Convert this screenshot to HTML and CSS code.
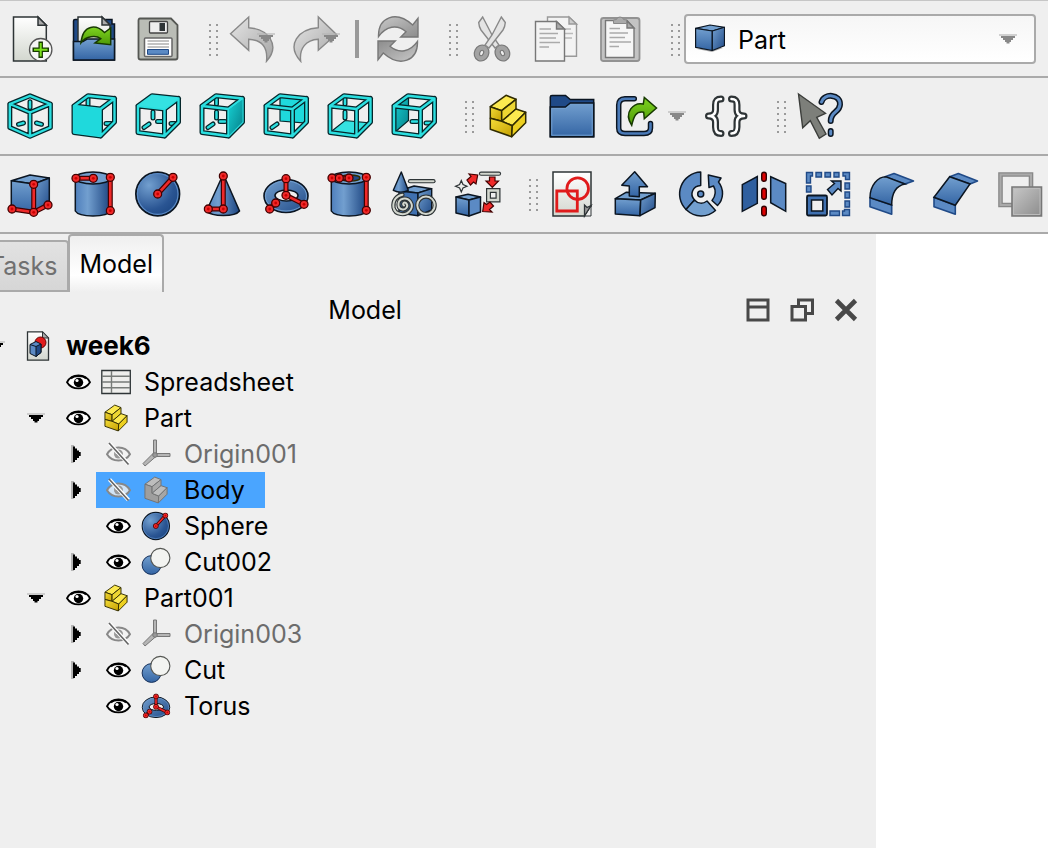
FILE: index.html
```
<!DOCTYPE html>
<html lang="en">
<head>
<meta charset="utf-8">
<title>week6</title>
<link rel="stylesheet" href="styles.css">
</head>
<body>
<svg class="defs" width="0" height="0" aria-hidden="true">
  <defs>
    <linearGradient id="blue" x1="0" y1="0" x2="1" y2="1"><stop offset="0" stop-color="#729fcf"/><stop offset="1" stop-color="#204a87"/></linearGradient>
    <radialGradient id="blueBall" cx=".3" cy=".3" r=".75"><stop offset="0" stop-color="#729fcf"/><stop offset=".75" stop-color="#2a5593"/><stop offset="1" stop-color="#204a87"/></radialGradient>
    <linearGradient id="blueV" x1="0" y1="0" x2="0" y2="1"><stop offset="0" stop-color="#729fcf"/><stop offset="1" stop-color="#3465a4"/></linearGradient>
    <linearGradient id="blueH" x1="0" y1="0" x2="1" y2="0"><stop offset="0" stop-color="#4f7fbc"/><stop offset=".35" stop-color="#729fcf"/><stop offset="1" stop-color="#1c4480"/></linearGradient>
    <linearGradient id="paper" x1="0" y1="0" x2="0" y2="1"><stop offset="0" stop-color="#fff"/><stop offset="1" stop-color="#d3d7cf"/></linearGradient>
    <linearGradient id="grey" x1="0" y1="0" x2="1" y2="1"><stop offset="0" stop-color="#c8c8c8"/><stop offset="1" stop-color="#8c8c8c"/></linearGradient>
    <linearGradient id="pale" x1="0" y1="0" x2="1" y2="1"><stop offset="0" stop-color="#e6e6e6"/><stop offset="1" stop-color="#a6a6a6"/></linearGradient>
    <linearGradient id="green" x1="0" y1="0" x2="0" y2="1"><stop offset="0" stop-color="#7ed321"/><stop offset="1" stop-color="#4e9a06"/></linearGradient>
    <linearGradient id="teal" x1="0" y1="0" x2="1" y2="1"><stop offset="0" stop-color="#16d0d2"/><stop offset="1" stop-color="#06808a"/></linearGradient>
    <linearGradient id="gold" x1="0" y1="0" x2="1" y2="1"><stop offset="0" stop-color="#f5dd3a"/><stop offset="1" stop-color="#c4a000"/></linearGradient>

    <g id="frame"><path d="M4 14 30.500 17V44L4 40.500ZM4 14 18 3.800 44.500 6.500V30L30.500 44M30.500 17 44.500 6.500"/></g>
    <symbol id="ball" viewBox="-5 -5 10 10"><circle r="4" fill="#ef2929" stroke="#400" stroke-width="1.300"/><circle r="1.400" fill="#c00"/></symbol>
    <symbol id="menu-arrow" viewBox="0 0 18 10"><path d="M0 0H18V2H0Z" fill="#b5b5b5" opacity=".6"/><path d="M2 2H16V4H14V6H12V8H10.500V9.500H7.500V8H6V6H4V4H2Z"/></symbol>
    <symbol id="right-arrow" viewBox="0 0 10 18"><path d="M0 0H3V18H0Z" fill="#b5b5b5"/><path d="M2 1.500H4V3.500H6V5.500H8V7H9.700V11H8V13H6V15H4V17H2Z"/></symbol>
    <symbol id="part" viewBox="0 0 48 48">
      <g stroke="#302b00" stroke-width="1.500" stroke-linejoin="round">
        <path d="M6.300 14.700 22 3.300 32 7.300 17.700 18.700Z" fill="#fce94f"/>
        <path d="M6.300 14.700 17.700 18.700V29.300L6.300 26.300Z" fill="url(#gold)"/>
        <path d="M17.700 18.700 32 7.300V17L17.700 29.300Z" fill="#edd632"/>
        <path d="M17.700 29.300 32 17 41.700 20.300 28.300 33.700Z" fill="#fce94f"/>
        <path d="M6.300 26.300 17.700 29.300 28.300 33.700 27.700 44.700 6.300 37.300Z" fill="url(#gold)"/>
        <path d="M28.300 33.700 41.700 20.300V30.700L27.700 44.700Z" fill="#edd020"/>
      </g>
    </symbol>
    <symbol id="sphere" viewBox="0 0 48 48">
      <circle cx="23.700" cy="24" r="21.800" fill="url(#blueBall)" stroke="#0b1521" stroke-width="1.800"/>
      <circle cx="23.700" cy="24" r="20.300" fill="none" stroke="#5b8ac4" stroke-width="1.200"/>
      <path class="rod-o" d="M23.700 24 39 7.300"/><path class="rod-i" d="M23.700 24 39 7.300"/>
      <use href="#ball" x="18.700" y="19" width="10" height="10"/><use href="#ball" x="34" y="2.300" width="10" height="10"/>
    </symbol>
    <symbol id="torus" viewBox="0 0 48 48">
      <path fill-rule="evenodd" d="M2 26a22 16.500 0 1 0 44 0a22 16.500 0 1 0-44 0ZM13 25.500a11.500 5.500 0 1 1 23 0a11.500 5.500 0 1 1-23 0Z" fill="url(#blue)" stroke="#0b1521" stroke-width="1.600"/>
      <ellipse cx="24" cy="26" rx="20.500" ry="15" fill="none" stroke="#729fcf"/>
      <path class="rod-o" d="M24 8.700V25.300L42 34.300M13.700 33 7.700 39"/><path class="rod-i" d="M24 8.700V25.300L42 34.300M13.700 33 7.700 39"/>
      <use href="#ball" x="19" y="3.700" width="10" height="10"/><use href="#ball" x="19" y="20.300" width="10" height="10"/><use href="#ball" x="37" y="29.300" width="10" height="10"/><use href="#ball" x="8.700" y="28" width="10" height="10"/><use href="#ball" x="2.700" y="34" width="10" height="10"/>
    </symbol>
    <symbol id="eye" viewBox="0 0 25 16">
      <path d="M1 8.200C6-.8 19-.8 24 8.200 19 16.500 6 16.500 1 8.200Z" fill="#fff" stroke="#000" stroke-width="1.800"/>
      <path d="M5 4.500C8 1 17 1 20 4.500" fill="none" stroke="#000" stroke-width="2"/>
      <circle cx="12.500" cy="8.500" r="4.700"/><circle cx="11" cy="6.500" r="1.600" fill="#fff"/>
    </symbol>
    <symbol id="eye-off" viewBox="0 0 25 24">
      <path d="M1 12.200C6 3.200 19 3.200 24 12.200 19 20.500 6 20.500 1 12.200Z" fill="#f4f4f4" fill-opacity=".8" stroke="#888" stroke-width="2"/>
      <circle cx="12.500" cy="12" r="4.500" fill="#999"/><circle cx="11" cy="10.500" r="1.600" fill="#fff"/>
      <path d="M3.500 1.500 22.500 22" stroke="#fff" stroke-width="4"/><path d="M3 1 22.500 22.500" stroke="#666" stroke-width="1.700"/>
    </symbol>
    <symbol id="origin" viewBox="0 0 30 30">
      <g stroke="#777" stroke-width="1" fill="#b5b5b5"><path d="M12.500 1H15.500V15H12.500Z"/><path d="M14 14.500H29V17.500H14Z"/><path d="M12.500 14 2 24.500 4 27 15.500 17Z"/><circle cx="14" cy="16" r="2.300" fill="#999"/></g>
    </symbol>
    <symbol id="cut-shape" viewBox="0 0 30 30">
      <circle cx="10.500" cy="18" r="9.400" fill="url(#blueV)" stroke="#16305a" stroke-width="1"/>
      <circle cx="19.300" cy="11" r="9.600" fill="#f3f4f1" stroke="#555753" stroke-width="1.100"/>
    </symbol>
  </defs>
</svg>

<header class="toolbars">
  <div class="toolbar" role="toolbar" aria-label="File">
    <button class="tool" aria-label="New"><svg viewBox="0 0 48 48"><path d="M7.500 2H32L40.300 10.300V46H7.500Z" fill="url(#paper)" stroke="#2e3436" stroke-width="1.500"/><path d="M32 2V10.300H40.300Z" fill="#aaa" stroke="#2e3436" stroke-width="1.500"/><circle cx="34.700" cy="34.700" r="11.200" fill="#f5f5f5" stroke="#555" stroke-width="1.300"/><path d="M34.700 26.500V43M26.500 34.700H43" stroke="#173a00" stroke-width="4.500"/><path d="M34.700 28V41.500M28 34.700H41.500" stroke="#7be01c" stroke-width="2"/></svg></button>
    <button class="tool" aria-label="Open"><svg viewBox="0 0 48 48"><path d="M3.500 6Q3.500 4.500 5 4.500H42V9H44.500V45H3.500Z" fill="#204a87" stroke="#0b1521" stroke-width="1.500"/><path d="M8 2H32L40 10V34H8Z" fill="url(#paper)" stroke="#2e3436" stroke-width="1.500"/><path d="M32 2V10H40Z" fill="#aaa" stroke="#2e3436" stroke-width="1.500"/><path d="M3.500 26.500H13L17 24H44.500V45H3.500Z" fill="url(#blueV)" stroke="#0b1521" stroke-width="1.500"/><path d="M11 27.700C13 8 27 10 34.500 17.500L40.700 13V29.700L25 28 30.700 23.700C26 20 16 21 11 27.700Z" fill="url(#green)" stroke="#173a00" stroke-width="1.500"/></svg></button>
    <button class="tool" aria-label="Save"><svg viewBox="0 0 48 48"><path d="M6 3.500H37L43.500 10V42.500Q43.500 44.500 41.500 44.500H6.500Q4.500 44.500 4.500 42.500V5.500Q4.500 3.500 6 3.500Z" fill="#babdb6" stroke="#555753" stroke-width="1.800"/><rect x="15.500" y="6.500" width="18" height="11.500" rx="1" fill="#eee" stroke="#444" stroke-width="1.300"/><path d="M25.500 8H31V16H25.500Z" fill="#2e3436"/><rect x="10.500" y="23" width="27.500" height="18.500" rx="1" fill="#fff" stroke="#666" stroke-width="1.500"/><path d="M13.500 26H35M13.500 29H35M13.500 32H35" stroke="#888" stroke-width="1.200"/><path d="M13.500 34.500H34.500V39.300H13.500Z" fill="#5b8ac4" stroke="#204a87"/></svg></button>
    <span class="handle"></span>
    <button class="tool" aria-label="Undo"><svg viewBox="0 0 48 48"><path d="M2.500 18.700 20.700 2V12.700C40 14 53 30 38.500 46.300 40 32 34 25 20.700 24.300V35.300Z" fill="url(#pale)" stroke="#888" stroke-width="1.400"/><use href="#menu-arrow" x="29" y="18" width="18" height="10" fill="#888"/></svg></button>
    <button class="tool" aria-label="Redo"><svg viewBox="0 0 48 48"><path d="M44.300 19.300 26.300 2V12.700C6 14-6 30 8.700 46.300 7 33 14 25 26.300 24.300V35.300Z" fill="url(#pale)" stroke="#888" stroke-width="1.400"/><use href="#menu-arrow" x="30" y="18" width="18" height="10" fill="#888"/></svg></button>
    <span class="separator"></span>
    <button class="tool" aria-label="Refresh"><svg viewBox="0 0 48 48"><g fill="url(#grey)" stroke="#777" stroke-width="1.400"><path d="M4.500 21.700C4 2 22-5 38.700 10L44 3.300V22H26.700L32 16.700C23 9 12 11 4.500 21.700Z"/><path transform="rotate(180 24 24)" d="M4.500 21.700C4 2 22-5 38.700 10L44 3.300V22H26.700L32 16.700C23 9 12 11 4.500 21.700Z"/></g></svg></button>
    <span class="handle"></span>
    <button class="tool" aria-label="Cut"><svg viewBox="0 0 48 48"><g stroke="#888" stroke-width="1.400"><g fill="none" stroke="#777" stroke-width="6.500"><ellipse cx="13.600" cy="38" rx="4.500" ry="5.500" transform="rotate(25 13.600 38)"/><ellipse cx="34.400" cy="38" rx="4.500" ry="5.500" transform="rotate(-25 34.400 38)"/></g><path d="M14.700 2 10.700 7.500Q11 12 13 15L27 33 31 30 24 20Z" fill="#e4e4e4"/><path d="M33.300 2 37.300 7.500Q37 12 35 15L21 33 17 30 24 20Z" fill="#e4e4e4"/><g fill="none" stroke="#a3a3a3" stroke-width="4.200"><ellipse cx="13.600" cy="38" rx="4.500" ry="5.500" transform="rotate(25 13.600 38)"/><ellipse cx="34.400" cy="38" rx="4.500" ry="5.500" transform="rotate(-25 34.400 38)"/></g></g></svg></button>
    <button class="tool" aria-label="Copy"><svg viewBox="0 0 48 48"><g fill="#f3f3f3" stroke="#999" stroke-width="1.400"><path d="M15.500 2H37L44.500 9V41.300H15.500Z"/><path d="M37 2V9H44.500Z" fill="#ccc"/><path d="M33 14H39M33 18.500H41M33 23H40" stroke="#bbb"/><path d="M3.500 6.500H24.500L32.500 14V46H3.500Z" stroke="#777"/><path d="M24.500 6.500V14H32.500Z" fill="#aaa" stroke="#777"/><path d="M7.500 14H19M7.500 18.500H26M7.500 23H24M7.500 27.500H28M7.500 32H17" stroke="#aaa"/></g></svg></button>
    <button class="tool" aria-label="Paste"><svg viewBox="0 0 48 48"><rect x="5" y="3" width="38.500" height="43" rx="2.500" fill="#c3c3c3" stroke="#929292" stroke-width="1.800"/><path d="M9.500 5.500H31L38 13V42.500H9.500Z" fill="#f6f6f6" stroke="#777" stroke-width="1.400"/><path d="M31 6V13H38Z" fill="#aaa" stroke="#777" stroke-width="1.400"/><path d="M17.500 8.500V5L20.500 4.500Q21 2 24 2T27.500 4.500L30.500 5V8.500Z" fill="#aaa" stroke="#888"/><path d="M13.500 13.500H24M13.500 18H32M13.500 22.500H29M13.500 27H35M13.500 31.500H23" stroke="#aaa" stroke-width="1.400"/></svg></button>
    <span class="handle handle-tight"></span>
    <div class="workbench">
      <svg class="workbench-icon" viewBox="0 0 30 28"><path d="M2 25 17 28 28 24Z" fill="#aaa"/><g stroke="#0b1521" stroke-width="1.200" stroke-linejoin="round"><path d="M.6 4.300 15 1 29.500 3.300 17.300 7Z" fill="#729fcf"/><path d="M.6 4.300 17.300 7V26.500L.6 23.300Z" fill="url(#blueV)"/><path d="M17.300 7 29.500 3.300V21.700L17.300 26.500Z" fill="url(#blue)"/></g></svg>
      <select aria-label="Workbench"><option>Part</option></select>
      <svg class="workbench-arrow" viewBox="0 0 18 10" fill="#888"><use href="#menu-arrow"/></svg>
    </div>
  </div>

  <div class="toolbar" role="toolbar" aria-label="View and structure">
    <button class="tool" aria-label="Isometric"><svg viewBox="0 0 48 48"><g class="bar-o"><path d="M24 3.800 44.400 12V35.500L24 44.300 3.800 35.500V12ZM3.800 12 24 20.500 44.400 12M24 20.500V44M24 9.700V15.500M12.500 32.300 17.500 31M30.500 31 35.500 32.300"/></g><g class="bar-i"><path d="M24 3.800 44.400 12V35.500L24 44.300 3.800 35.500V12ZM3.800 12 24 20.500 44.400 12M24 20.500V44M24 9.700V15.500M12.500 32.300 17.500 31M30.500 31 35.500 32.300"/></g></svg></button>
    <button class="tool" aria-label="Front"><svg viewBox="0 0 48 48"><path class="bar-o" d="M18 5V13M36 31.500H41"/><path class="bar-i" d="M18 5V13M36 31.500H41"/><use href="#frame" class="bar-o"/><use href="#frame" class="bar-i"/><path d="M3.300 13.300 30.500 16.500V44.500L3.300 41Z" fill="#1fd9dc"/></svg></button>
    <button class="tool" aria-label="Top"><svg viewBox="0 0 48 48"><path class="bar-o" d="M19 20V26M10 35.500 15 32M23.500 29.500H28M37 31.500H41"/><path class="bar-i" d="M19 20V26M10 35.500 15 32M23.500 29.500H28M37 31.500H41"/><use href="#frame" class="bar-o"/><use href="#frame" class="bar-i"/><path d="M4 13.500 18 3.300 45 6 30.500 16.700Z" fill="#34e2e2"/></svg></button>
    <button class="tool" aria-label="Right"><svg viewBox="0 0 48 48"><path class="bar-o" d="M18.500 5V12M18.500 20V26M10 35.500 15 32M22 29.500H27"/><path class="bar-i" d="M18.500 5V12M18.500 20V26M10 35.500 15 32M22 29.500H27"/><use href="#frame" class="bar-o"/><use href="#frame" class="bar-i"/><path d="M31 17.500 44.500 7.500V30L31 43.500Z" fill="url(#teal)"/></svg></button>
    <button class="tool" aria-label="Rear"><svg viewBox="0 0 48 48"><path d="M18 5 44 7V31L18 29Z" fill="#1fd9dc" stroke="#05272b" stroke-width="1.200"/><path class="bar-o" d="M10 35.500 15 32"/><path class="bar-i" d="M10 35.500 15 32"/><use href="#frame" class="bar-o"/><use href="#frame" class="bar-i"/></svg></button>
    <button class="tool" aria-label="Bottom"><svg viewBox="0 0 48 48"><path d="M4 40.500 19 28.500 44 31 30.500 44Z" fill="#34e2e2" stroke="#05272b" stroke-width="1.200"/><path class="bar-o" d="M19 5V12M19 20V26"/><path class="bar-i" d="M19 5V12M19 20V26"/><use href="#frame" class="bar-o"/><use href="#frame" class="bar-i"/></svg></button>
    <button class="tool" aria-label="Left"><svg viewBox="0 0 48 48"><path d="M4 14 18.500 4V28.500L4 41Z" fill="url(#teal)" stroke="#05272b" stroke-width="1.200"/><path class="bar-o" d="M22 29.500H27M36 31H41"/><path class="bar-i" d="M22 29.500H27M36 31H41"/><use href="#frame" class="bar-o"/><use href="#frame" class="bar-i"/></svg></button>
    <span class="handle"></span>
    <button class="tool" aria-label="Create part"><svg><use href="#part"/></svg></button>
    <button class="tool" aria-label="Create group"><svg viewBox="0 0 48 48"><path d="M2.300 5Q2.300 3.500 4 3.500H17.500L22.300 7.500H45.700V44.700H2.300Z" fill="#204a87" stroke="#0b1521" stroke-width="1.500"/><path d="M2.300 15H17.300L22.300 11H45.700V44.700H2.300Z" fill="url(#blueV)" stroke="#0b1521" stroke-width="1.500"/><path d="M3.800 16.500H18L22.800 12.500H44.200V43.200H3.800Z" fill="none" stroke="#729fcf"/></svg></button>
    <button class="tool" aria-label="Make link"><svg viewBox="0 0 48 48"><g fill="none" stroke-linecap="round"><path d="M22.300 6.700H13Q6.700 7 6.700 13V36Q6.700 41.500 13 41.500H32Q38.500 41.500 38.500 36V31.500" stroke="#0b1521" stroke-width="5.500"/><path d="M22.300 6.700H13Q6.700 7 6.700 13V36Q6.700 41.500 13 41.500H32Q38.500 41.500 38.500 36V31.500" stroke="#4a7ab8" stroke-width="2.600"/></g><path d="M19.700 33.300C11 20 22 10 31.300 12L32.300 5.500 44.500 16 32.300 26.700 31.700 20.300C24 19 22 24 19.700 33.300Z" fill="url(#green)" stroke="#173a00" stroke-width="1.500"/></svg></button>
    <button class="tool-menu" aria-label="Link options"><svg viewBox="0 0 18 10" fill="#888"><use href="#menu-arrow"/></svg></button>
    <button class="tool" aria-label="Variable set"><svg viewBox="0 0 48 48"><g fill="none" stroke-linecap="round" stroke-linejoin="round"><path d="M19 7C14.500 7 13.500 9 13.500 13V18C13.500 22 11 24 6.500 24 11 24 13.500 26 13.500 30V35C13.500 39 14.500 41.500 19 41.500M29.500 7C34 7 35 9 35 13V18C35 22 37.500 24 42 24 37.500 24 35 26 35 30V35C35 39 34 41.500 29.500 41.500" stroke="#2e3436" stroke-width="7"/><path d="M19 7C14.500 7 13.500 9 13.500 13V18C13.500 22 11 24 6.500 24 11 24 13.500 26 13.500 30V35C13.500 39 14.500 41.500 19 41.500M29.500 7C34 7 35 9 35 13V18C35 22 37.500 24 42 24 37.500 24 35 26 35 30V35C35 39 34 41.500 29.500 41.500" stroke="#fff" stroke-width="2.600"/></g></svg></button>
    <span class="handle"></span>
    <button class="tool" aria-label="What's this?"><svg viewBox="0 0 48 48"><g fill="none" stroke-linecap="round"><path d="M25.500 10C28 1 44.500 2 44 12.500 43.500 21 34.700 19 34.700 29M34.700 39V42" stroke="#0b1521" stroke-width="6"/><path d="M25.500 10C28 1 44.500 2 44 12.500 43.500 21 34.700 19 34.700 29M34.700 39V42" stroke="#5b8ac4" stroke-width="3"/></g><path d="M2.500 2 29.500 21.300 20.700 25.300 30 42 23.300 46.300 14.300 28.700 6.700 35.700Z" fill="#7d7f7a" stroke="#3c3e3b" stroke-width="1.400"/></svg></button>
  </div>

  <div class="toolbar" role="toolbar" aria-label="Solids and part tools">
    <button class="tool" aria-label="Cube"><svg viewBox="0 0 48 48"><g stroke="#0b1521" stroke-width="1.500" stroke-linejoin="round"><path d="M5.300 10.700 24 5 43.300 8 27.700 14Z" fill="#729fcf"/><path d="M5.300 10.700 27.700 14V42.700L5.300 39.300Z" fill="url(#blueV)"/><path d="M27.700 14 43.300 8V34.300L27.700 42.700Z" fill="url(#blue)"/></g><path class="rod-o" d="M27.700 14.300V42.300L6 39M27.700 42.300 42 35"/><path class="rod-i" d="M27.700 14.300V42.300L6 39M27.700 42.300 42 35"/><use href="#ball" x="22.700" y="9.300" width="10" height="10"/><use href="#ball" x="22.700" y="37.300" width="10" height="10"/><use href="#ball" x="1" y="34" width="10" height="10"/><use href="#ball" x="37" y="30" width="10" height="10"/></svg></button>
    <button class="tool" aria-label="Cylinder"><svg viewBox="0 0 48 48"><g stroke="#0b1521" stroke-width="1.500"><path d="M5.300 8V41C9 47.500 37 47.500 40.700 41V8Z" fill="url(#blueH)"/><ellipse cx="23" cy="8" rx="17.700" ry="6" fill="#729fcf"/></g><path class="rod-o" d="M6 8.300H23.300M40.300 7.300V40.700"/><path class="rod-i" d="M6 8.300H23.300M40.300 7.300V40.700"/><use href="#ball" x="1" y="3.300" width="10" height="10"/><use href="#ball" x="18.300" y="3.300" width="10" height="10"/><use href="#ball" x="35.300" y="2.300" width="10" height="10"/><use href="#ball" x="35.300" y="35.700" width="10" height="10"/></svg></button>
    <button class="tool" aria-label="Sphere"><svg><use href="#sphere"/></svg></button>
    <button class="tool" aria-label="Cone"><svg viewBox="0 0 48 48"><path d="M25.300 4 8.500 41C14 47 37 47 41.500 41Z" fill="url(#blueH)" stroke="#0b1521" stroke-width="1.500"/><path class="rod-o" d="M25.300 6V39H10.300"/><path class="rod-i" d="M25.300 6V39H10.300"/><use href="#ball" x="20.300" y="1" width="10" height="10"/><use href="#ball" x="20.300" y="34" width="10" height="10"/><use href="#ball" x="5.300" y="34" width="10" height="10"/></svg></button>
    <button class="tool" aria-label="Torus"><svg><use href="#torus"/></svg></button>
    <button class="tool" aria-label="Tube"><svg viewBox="0 0 48 48"><g stroke="#0b1521" stroke-width="1.500"><path d="M5.300 8V41C9 47.500 37 47.500 40.700 41V8Z" fill="url(#blueH)"/><ellipse cx="23" cy="8" rx="17.700" ry="6" fill="#729fcf"/><ellipse cx="24" cy="8" rx="10" ry="3" fill="#204a87" stroke="#302b00"/></g><path class="rod-o" d="M6 8H23M40.300 7.300V40.700"/><path class="rod-i" d="M6 8H23M40.300 7.300V40.700"/><use href="#ball" x="1" y="3" width="10" height="10"/><use href="#ball" x="8.300" y="3" width="10" height="10"/><use href="#ball" x="18" y="3" width="10" height="10"/><use href="#ball" x="35.300" y="2.300" width="10" height="10"/><use href="#ball" x="35.300" y="35.300" width="10" height="10"/></svg></button>
    <button class="tool" aria-label="Primitives"><svg viewBox="0 0 48 48"><g stroke="#0b1521" stroke-width="1.400" stroke-linejoin="round"><path d="M9 21 24 16 41.700 18.700 28 23Z" fill="#729fcf"/><path d="M9 21 28 23V45.700L9 43Z" fill="#3f70b0"/><path d="M28 23 41.700 18.700V40L28 45.700Z" fill="url(#blue)"/><path d="M11.300 2 3.300 20.300Q11 24 18.300 20.300Z" fill="url(#blueH)"/></g><g fill="none" stroke-linecap="round"><g stroke="#2e3436" stroke-width="4.200"><path d="M20 11.200H43.500"/><circle cx="36" cy="35.300" r="8.700"/><path d="M14 35.500C12 34 14 31.500 16 33 19 36 16 40 12.500 39.500 7 38.500 7 30 13 28.700 20 27.500 24 35 20.500 40 16 46.500 5 45 3.500 37.500 2.500 30 7 25.500 12.500 24.700"/></g><g stroke="#d3d7cf" stroke-width="2"><path d="M20 11.200H43.500"/><circle cx="36" cy="35.300" r="8.700"/><path d="M14 35.500C12 34 14 31.500 16 33 19 36 16 40 12.500 39.500 7 38.500 7 30 13 28.700 20 27.500 24 35 20.500 40 16 46.500 5 45 3.500 37.500 2.500 30 7 25.500 12.500 24.700"/></g></g></svg></button>
    <button class="tool" aria-label="Shape builder"><svg viewBox="0 0 48 48"><g stroke="#0b1521" stroke-width="1.500" stroke-linejoin="round"><path d="M2 27 14 24.300 26.500 27 15 30Z" fill="#729fcf"/><path d="M2 27 15 30V46L2 43Z" fill="url(#blueV)"/><path d="M15 30 26.500 27V42L15 46Z" fill="#5b8ac4"/></g><path d="M7.300 10.500 9 14.600 13 16.300 9 18 7.300 22 5.600 18 1.500 16.300 5.600 14.600Z" fill="#eeeeec" stroke="#2e3436" stroke-width="1.200"/><path d="M27 3.700H45" stroke="#2e3436" stroke-width="4.200" stroke-linecap="round"/><path d="M27 3.700H45" stroke="#d3d7cf" stroke-width="2" stroke-linecap="round"/><path d="M34.500 20.500H44V30H34.500Z" fill="none" stroke="#2e3436" stroke-width="5"/><path d="M34.500 20.500H44V30H34.500Z" fill="none" stroke="#d3d7cf" stroke-width="2.600"/><g fill="#ef2929" stroke="#400" stroke-width="1.200"><path d="M35.500 7H41V11H44.500L38.300 17.500 32 11H35.500Z"/><path d="M13 10 17 6.500 15 4 23.700 5 22 14 19.500 12 16.500 15Z"/><path d="M39.500 36 35.500 39.500 38 42 28.700 41.500 30 32.500 32.500 34.500 36 32Z"/></g></svg></button>
    <span class="handle"></span>
    <button class="tool" aria-label="Sketch"><svg viewBox="0 0 48 48"><path d="M5 2H43V36L36.500 46H5Z" fill="url(#paper)" stroke="#2e3436" stroke-width="1.500"/><path d="M36.500 46H43V36Z" fill="#efefef" stroke="#2e3436"/><path d="M36.500 46V35L39 37.500 43 35.500Z" fill="#999" stroke="#2e3436" stroke-width="1.300"/><g fill="none" stroke="#e01b1b" stroke-width="2.800"><circle cx="29.700" cy="18.700" r="10.800"/><path d="M8.800 21H29.300V41H8.800Z"/></g></svg></button>
    <button class="tool" aria-label="Extrude"><svg viewBox="0 0 48 48"><g stroke="#0b1521" stroke-width="1.500" stroke-linejoin="round"><path d="M3.300 28.700 14 22.300 43.300 23.300 28.700 30Z" fill="#729fcf"/><path d="M3.300 28.700 28.700 30 28 45.700 3.300 44Z" fill="url(#blueV)"/><path d="M28.700 30 43.300 23.300 43 37.700 28 45.700Z" fill="url(#blue)"/><path d="M22.700 1.700 35.500 16.700H27.300V26.700L17.300 26V16L9.700 15.200Z" fill="url(#blueV)"/></g></svg></button>
    <button class="tool" aria-label="Revolve"><svg viewBox="0 0 48 48"><g stroke="#0b1521" stroke-width="1.500" stroke-linejoin="round"><path d="M24.700 2A22 22 0 0 0 10 39.500L18.500 30C13 24 17 16 24.700 15.500Z" fill="#5b8ac4"/><path d="M10 39.500C19 48 31 48 39.500 40.500L31 31C27 34 22 34 18.500 30Z" fill="#729fcf"/><path d="M32.300 5 45 8 42.500 12C48 19 48 29 41.500 35.500L36 30.500C40 26 40 20 37.500 16L33 17.500Z" fill="#5b8ac4"/><circle cx="24.700" cy="24" r="3" fill="#5b8ac4"/></g></svg></button>
    <button class="tool" aria-label="Mirror"><svg viewBox="0 0 48 48"><g stroke="#0b1521" stroke-width="1.500"><path d="M2.300 14.700 17.300 6.500V33.300L2.300 41.300Z" fill="#2f5f9f"/><path d="M30.700 6.700 45.700 13.500V41.300L30.700 32.700Z" fill="#5b8ac4"/></g><path d="M24 4.500V9M24 20.500V27M24 38.500V43.500" stroke="#300" stroke-width="6" stroke-linecap="round"/><path d="M24 4.500V9M24 20.500V27M24 38.500V43.500" stroke="#d00" stroke-width="3.200" stroke-linecap="round"/></svg></button>
    <button class="tool" aria-label="Scale"><svg viewBox="0 0 48 48"><g fill="#5b8ac4" stroke="#204a87" stroke-width="1.400"><path d="M2.500 2.500H8.500V6H6.500V13H2.500ZM12 2.500H17.500V7H12ZM21 2.500H26.500V7H21ZM30 2.500H35V7H30ZM39 2.500H45.500V9.500H41.500V6H39ZM2.500 16H7V22H2.500ZM41 13H45.500V19H41ZM41 22H45.500V28H41ZM41 31H45.500V37H41ZM26 41H35.500V45.500H26ZM38.500 41H40.500V39.500H45.500V45.500H38.500Z"/></g><rect x="3" y="25.500" width="20" height="20" rx="1.500" fill="#3f70b0" stroke="#0b1521" stroke-width="1.800"/><path d="M7.500 30H18.800V41H7.500Z" fill="#efefef" stroke="#0b1521" stroke-width="1.500"/><path d="M23.500 19.500 30.500 13.500 27.500 11H37V21L34 18.500 28 25Z" fill="#5b8ac4" stroke="#0b1521" stroke-width="1.400"/></svg></button>
    <button class="tool" aria-label="Fillet"><svg viewBox="0 0 48 48"><g stroke="#204a87" stroke-width="1.600" stroke-linejoin="round"><path d="M17 6.700 26 3.500 45.500 11 37 14Z" fill="#5b8ac4"/><path d="M2 27.700 23.700 35V44.300L2 36.700Z" fill="#5b8ac4"/></g><path d="M2 27.700C2 15 10 6.700 18 6.700L37 14C27 16 23.700 25 23.700 35Z" fill="url(#blueV)" stroke="#0b1521" stroke-width="1.500"/></svg></button>
    <button class="tool" aria-label="Chamfer"><svg viewBox="0 0 48 48"><g stroke="#204a87" stroke-width="1.600" stroke-linejoin="round"><path d="M17.700 6.700 26.300 3.500 45.500 11 38 14Z" fill="#5b8ac4"/><path d="M2 27.300 23.300 35.300V44.300L2 36.700Z" fill="#5b8ac4"/></g><path d="M2 27.300 17.700 6.700 38 14 23.300 35.300Z" fill="url(#blueV)" stroke="#0b1521" stroke-width="1.500"/></svg></button>
    <button class="tool" aria-label="Boolean"><svg viewBox="0 0 48 48"><path d="M4.500 4.500H35V35H4.500Z" fill="none" stroke="#888" stroke-width="4.600"/><path d="M4.500 4.500H35V35H4.500Z" fill="none" stroke="#aaa" stroke-width="2"/><path d="M16 17H45.500V46H16Z" fill="url(#grey)" stroke="#777" stroke-width="1.600"/><path d="M17.500 18.500H44V44.500H17.500Z" fill="none" stroke="#bbb"/></svg></button>
  </div>
</header>

<main class="workspace">
  <aside class="panel">
    <div class="tabs" role="tablist">
      <button class="tab" role="tab" aria-selected="false">Tasks</button>
      <button class="tab tab-active" role="tab" aria-selected="true">Model</button>
    </div>
    <div class="panel-head">
      <h1>Model</h1>
      <button aria-label="Shade"><svg viewBox="0 0 24 24"><path d="M2 2H22V22H2ZM2 9H22" /></svg></button>
      <button aria-label="Float"><svg viewBox="0 0 24 24"><path d="M8.500 8V2H22.500V15.500H16M2 8.500H15.500V22H2Z"/></svg></button>
      <button aria-label="Close"><svg viewBox="0 0 24 24"><path d="M2.500 2.500 21.500 21.500M21.500 2.500 2.500 21.500" stroke-width="4.600"/></svg></button>
    </div>
    <ul class="tree" role="tree">
      <li role="treeitem" aria-expanded="true">
        <div class="row root"><button class="toggle" aria-label="Collapse week6"><svg class="down"><use href="#menu-arrow"/></svg></button>
          <span class="item"><svg class="doc" viewBox="0 0 24 30"><path d="M1.500 .8H16.500L22.500 7V29.200H1.500Z" fill="url(#paper)" stroke="#2e3436" stroke-width="1.300"/><path d="M16.500 .8V7H22.500Z" fill="#aaa" stroke="#2e3436"/><circle cx="14.500" cy="11.500" r="5.500" fill="#e01b1b" stroke="#600"/><path d="M4 13.500 10 10.500 15 13V21.500L10 25.500 4 22.500Z" fill="#5b8ac4" stroke="#0b1521"/><path d="M10 15.500 15 13V21.500L10 25.500Z" fill="#204a87" stroke="#0b1521"/><path d="M4 13.500 10 15.500" stroke="#0b1521"/></svg><span class="label">week6</span></span></div>
        <ul role="group">
          <li role="treeitem"><div class="row"><span class="toggle"></span><span class="item"><button class="eye" aria-label="Hide"><svg><use href="#eye"/></svg></button><svg class="icon" viewBox="0 0 30 30"><path d="M.8 3.500H29.300V26.500H.8Z" fill="#eeeeec" stroke="#2e3436" stroke-width="1.300"/><path d="M1 9.200H29M1 15H29M1 20.800H29M10.500 4V26" stroke="#777b78" stroke-width="1.400"/></svg><span class="label">Spreadsheet</span></span></div></li>
          <li role="treeitem" aria-expanded="true">
            <div class="row"><button class="toggle" aria-label="Collapse Part"><svg class="down"><use href="#menu-arrow"/></svg></button><span class="item"><button class="eye" aria-label="Hide"><svg><use href="#eye"/></svg></button><svg class="icon"><use href="#part"/></svg><span class="label">Part</span></span></div>
            <ul role="group">
              <li role="treeitem"><div class="row"><button class="toggle" aria-label="Expand Origin001"><svg class="right"><use href="#right-arrow"/></svg></button><span class="item hidden-item"><button class="eye" aria-label="Show"><svg><use href="#eye-off"/></svg></button><svg class="icon"><use href="#origin"/></svg><span class="label">Origin001</span></span></div></li>
              <li role="treeitem" aria-selected="true"><div class="row"><button class="toggle" aria-label="Expand Body"><svg class="right"><use href="#right-arrow"/></svg></button><span class="item selected"><button class="eye" aria-label="Show"><svg><use href="#eye-off"/></svg></button><svg class="icon" viewBox="0 0 48 48"><g stroke="#747474" stroke-width="1.600" stroke-linejoin="round"><path d="M6.300 14.700 22 3.300 32 7.300 17.700 18.700Z" fill="#bdbdbd"/><path d="M6.300 14.700 17.700 18.700V29.300L28.300 33.700 27.700 44.700 6.300 37.300Z" fill="#9e9e9e"/><path d="M17.700 18.700 32 7.300V17L17.700 29.300Z" fill="#aaa"/><path d="M17.700 29.300 32 17 41.700 20.300 28.300 33.700Z" fill="#bdbdbd"/><path d="M28.300 33.700 41.700 20.300V30.700L27.700 44.700Z" fill="#a6a6a6"/></g></svg><span class="label">Body</span></span></div></li>
              <li role="treeitem"><div class="row"><span class="toggle"></span><span class="item"><button class="eye" aria-label="Hide"><svg><use href="#eye"/></svg></button><svg class="icon"><use href="#sphere"/></svg><span class="label">Sphere</span></span></div></li>
              <li role="treeitem"><div class="row"><button class="toggle" aria-label="Expand Cut002"><svg class="right"><use href="#right-arrow"/></svg></button><span class="item"><button class="eye" aria-label="Hide"><svg><use href="#eye"/></svg></button><svg class="icon"><use href="#cut-shape"/></svg><span class="label">Cut002</span></span></div></li>
            </ul>
          </li>
          <li role="treeitem" aria-expanded="true">
            <div class="row"><button class="toggle" aria-label="Collapse Part001"><svg class="down"><use href="#menu-arrow"/></svg></button><span class="item"><button class="eye" aria-label="Hide"><svg><use href="#eye"/></svg></button><svg class="icon"><use href="#part"/></svg><span class="label">Part001</span></span></div>
            <ul role="group">
              <li role="treeitem"><div class="row"><button class="toggle" aria-label="Expand Origin003"><svg class="right"><use href="#right-arrow"/></svg></button><span class="item hidden-item"><button class="eye" aria-label="Show"><svg><use href="#eye-off"/></svg></button><svg class="icon"><use href="#origin"/></svg><span class="label">Origin003</span></span></div></li>
              <li role="treeitem"><div class="row"><button class="toggle" aria-label="Expand Cut"><svg class="right"><use href="#right-arrow"/></svg></button><span class="item"><button class="eye" aria-label="Hide"><svg><use href="#eye"/></svg></button><svg class="icon"><use href="#cut-shape"/></svg><span class="label">Cut</span></span></div></li>
              <li role="treeitem"><div class="row"><span class="toggle"></span><span class="item"><button class="eye" aria-label="Hide"><svg><use href="#eye"/></svg></button><svg class="icon"><use href="#torus"/></svg><span class="label">Torus</span></span></div></li>
            </ul>
          </li>
        </ul>
      </li>
    </ul>
  </aside>
  <section class="canvas" aria-label="3D view"></section>
</main>
</body>
</html>
```
FILE: styles.css
```
* { box-sizing: border-box; }

body {
  margin: 0;
  min-height: 100vh;
  display: flex;
  flex-direction: column;
  overflow: hidden;
  background: #efefef;
  color: #000;
  font: 25px/36px Inter, "Liberation Sans", sans-serif;
}

button {
  padding: 0;
  border: 0;
  background: none;
  color: inherit;
  font: inherit;
}

svg { display: block; flex: none; }
.defs { position: absolute; }

/* Toolbars */
.toolbar {
  display: flex;
  align-items: center;
  height: 78px;
  padding: 0 12px 0 6px;
  border-bottom: 2px solid #aaa;
}
.toolbar:first-child {
  border-top: 1px solid #c6c6c6;
}
.tool { flex: none; width: 48px; height: 48px; }
.tool svg { width: 48px; height: 48px; }
.tool + .tool { margin-left: 16px; }
.tool-menu { width: 42px; padding-left: 8px; }
.tool-menu svg { width: 18px; height: 10px; }

.handle {
  flex: none;
  width: 46px;
  height: 34px;
  padding-left: 27px;
}
.handle::before {
  content: "";
  display: block;
  width: 10px;
  height: 34px;
  background: conic-gradient(#999 25%, transparent 0) -2px 2px / 4px 4px;
  background: linear-gradient(#9a9a9a, #9a9a9a) 0 0 / 2px 100% no-repeat, linear-gradient(#9a9a9a, #9a9a9a) 7px 0 / 2px 100% no-repeat;
  mask: repeating-linear-gradient(transparent 0 2px, #000 2px 4px, transparent 4px 6px);
}
.handle-tight { width: 40px; }

.separator {
  flex: none;
  width: 4px;
  height: 38px;
  margin: 0 15px;
  background: #999;
}

.workbench { position: relative; flex: 1; }
.workbench select {
  display: block;
  width: 100%;
  height: 50px;
  padding: 2px 52px 0;
  border: 2px solid #aaa;
  border-radius: 4px;
  appearance: none;
  background: linear-gradient(#f6f6f6, #fff);
  color: #000;
  font: inherit;
}
.workbench-icon { position: absolute; left: 11px; top: 10px; width: 30px; height: 28px; }
.workbench-arrow { position: absolute; right: 19px; top: 20px; width: 18px; height: 10px; }

.bar-o, .bar-i, .rod-o, .rod-i { fill: none; stroke-linecap: round; stroke-linejoin: round; }
.bar-o { stroke: #05272b; stroke-width: 5px; }
.bar-i { stroke: #2bdfe0; stroke-width: 2.4px; }
.rod-o { stroke: #400; stroke-width: 5px; }
.rod-i { stroke: #ef2929; stroke-width: 2.6px; }

/* Side panel */
.workspace { flex: 1; display: flex; }
.panel { flex: none; width: 83.6%; background: #efefef; }
.canvas { flex: 1; background: #fff; }

.tabs {
  display: flex;
  align-items: flex-end;
  height: 58px;
  overflow: hidden;
}
.tab {
  height: 52px;
  margin-left: -23px;
  padding: 0 10px;
  border: 2px solid #aaa;
  border-radius: 4px 4px 0 0;
  background: linear-gradient(#e2e2e2, #d6d6d6);
  color: #707070;
}
.tab-active {
  height: 58px;
  margin-left: -1px;
  padding: 0 9px;
  border-bottom: 0;
  background: linear-gradient(#efefef, #fff 70%, #efefef);
  color: #000;
}

.panel-head {
  display: flex;
  align-items: center;
  gap: 20px;
  height: 36px;
  padding: 0 18px 0 4px;
}
.panel-head h1 {
  flex: 1;
  margin: 0;
  font: inherit;
  text-align: center;
}
.panel-head svg {
  width: 24px;
  height: 24px;
  fill: none;
  stroke: #484848;
  stroke-width: 3px;
}

/* Model tree */
.tree, .tree ul { margin: 0; padding: 0; list-style: none; }
.tree ul { padding-left: 26px; }
.tree ul ul { padding-left: 40px; }
.row { display: flex; height: 36px; }
.toggle {
  flex: none;
  display: flex;
  align-items: center;
  justify-content: center;
  width: 20px;
  margin-right: 10px;
}
.root .toggle { margin-left: -14px; }
.down { width: 18px; height: 10px; }
.right { width: 10px; height: 18px; }
.item {
  display: flex;
  align-items: center;
  padding: 0 20px 0 10px;
}
.eye { width: 25px; margin-right: 10px; }
.eye svg { width: 25px; height: 24px; }
.icon { width: 30px; height: 30px; margin-right: 13px; }
.doc { width: 24px; height: 30px; margin-right: 16px; }
.root .label { font-size: 26px; font-weight: 700; }
.hidden-item .label { color: #6c6c6c; }
.selected { background: #4aa5ff; }
```
